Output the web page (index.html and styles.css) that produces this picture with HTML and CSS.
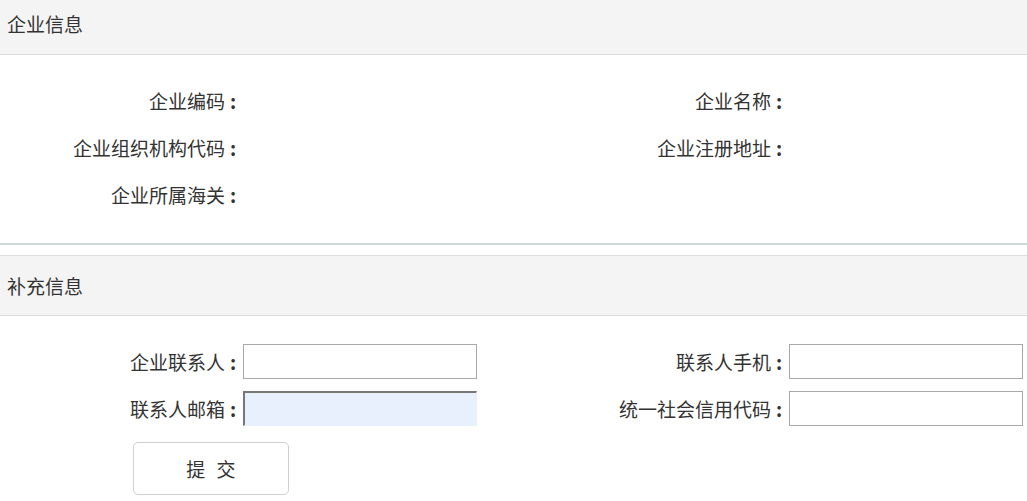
FILE: index.html
```html
<!DOCTYPE html>
<html lang="zh-CN">
<head>
<meta charset="utf-8">
<title>企业信息</title>
<link rel="stylesheet" href="styles.css">
</head>
<body>
<section class="panel panel-info">
  <div class="panel-head panel-head-first">企业信息</div>
  <div class="panel-body">
    <div class="form-grid">
      <div class="label">企业编码<span class="colon">:</span></div>
      <div class="value"></div>
      <div class="label">企业名称<span class="colon">:</span></div>
      <div class="value"></div>
      <div class="label">企业组织机构代码<span class="colon">:</span></div>
      <div class="value"></div>
      <div class="label">企业注册地址<span class="colon">:</span></div>
      <div class="value"></div>
      <div class="label">企业所属海关<span class="colon">:</span></div>
      <div class="value"></div>
      <div class="label"></div>
      <div class="value"></div>
    </div>
  </div>
</section>
<section class="panel panel-extra">
  <div class="panel-head">补充信息</div>
  <div class="panel-body panel-body-form">
    <div class="form-grid">
      <div class="label">企业联系人<span class="colon">:</span></div>
      <div class="value"><input class="field" type="text"></div>
      <div class="label">联系人手机<span class="colon">:</span></div>
      <div class="value"><input class="field" type="text"></div>
      <div class="label">联系人邮箱<span class="colon">:</span></div>
      <div class="value"><input class="field field-filled" type="text"></div>
      <div class="label">统一社会信用代码<span class="colon">:</span></div>
      <div class="value"><input class="field" type="text"></div>
    </div>
    <div class="actions">
      <button class="btn" type="button">提 交</button>
    </div>
  </div>
</section>
</body>
</html>
```
FILE: styles.css
```css
html, body {
  margin: 0;
  padding: 0;
  background: #fff;
}
body {
  font-family: "Noto Sans CJK SC", "Liberation Sans", sans-serif;
  font-size: 19px;
  color: #333;
  width: 1027px;
  overflow: hidden;
}
.panel-info {
  border-bottom: 2px solid #cbd8db;
}
.panel-extra {
  margin-top: 10px;
}
.panel-head {
  height: 59px;
  line-height: 59px;
  padding-left: 7px;
  background: #f4f4f4;
  border-top: 1px solid #dcdcdc;
  border-bottom: 1px solid #dcdcdc;
}
.panel-head-first {
  height: 54px;
  line-height: 48px;
  border-top: none;
}
.panel-body {
  padding: 22px 0 25px;
}
.panel-body-form {
  padding: 22px 0 10px;
}
.form-grid {
  display: grid;
  grid-template-columns: 241px 273px 273px 240px;
  grid-auto-rows: 47px;
  align-items: center;
}
.label {
  text-align: right;
  white-space: nowrap;
}
.colon {
  display: inline-block;
  width: 16px;
  text-align: center;
  font-weight: bold;
}
.value {
  padding-left: 2px;
  display: flex;
  align-items: center;
}
.field {
  box-sizing: border-box;
  width: 234px;
  height: 35px;
  margin: 0;
  border: 1px solid #a8a8a8;
  background: #fff;
  font: inherit;
  padding: 0 4px;
}
.field-filled {
  background: #e8f0fe;
  border-style: solid;
  border-color: #777 #e8f0fe #e8f0fe #777;
  border-width: 2px 1px 1px 2px;
}
.actions {
  padding-left: 133px;
  padding-top: 10px;
}
.btn {
  width: 156px;
  height: 53px;
  background: #fff;
  border: 1px solid #cfcfcf;
  border-radius: 5px;
  font-family: inherit;
  font-size: 19px;
  word-spacing: 7px;
  color: #333;
  cursor: pointer;
}
```
